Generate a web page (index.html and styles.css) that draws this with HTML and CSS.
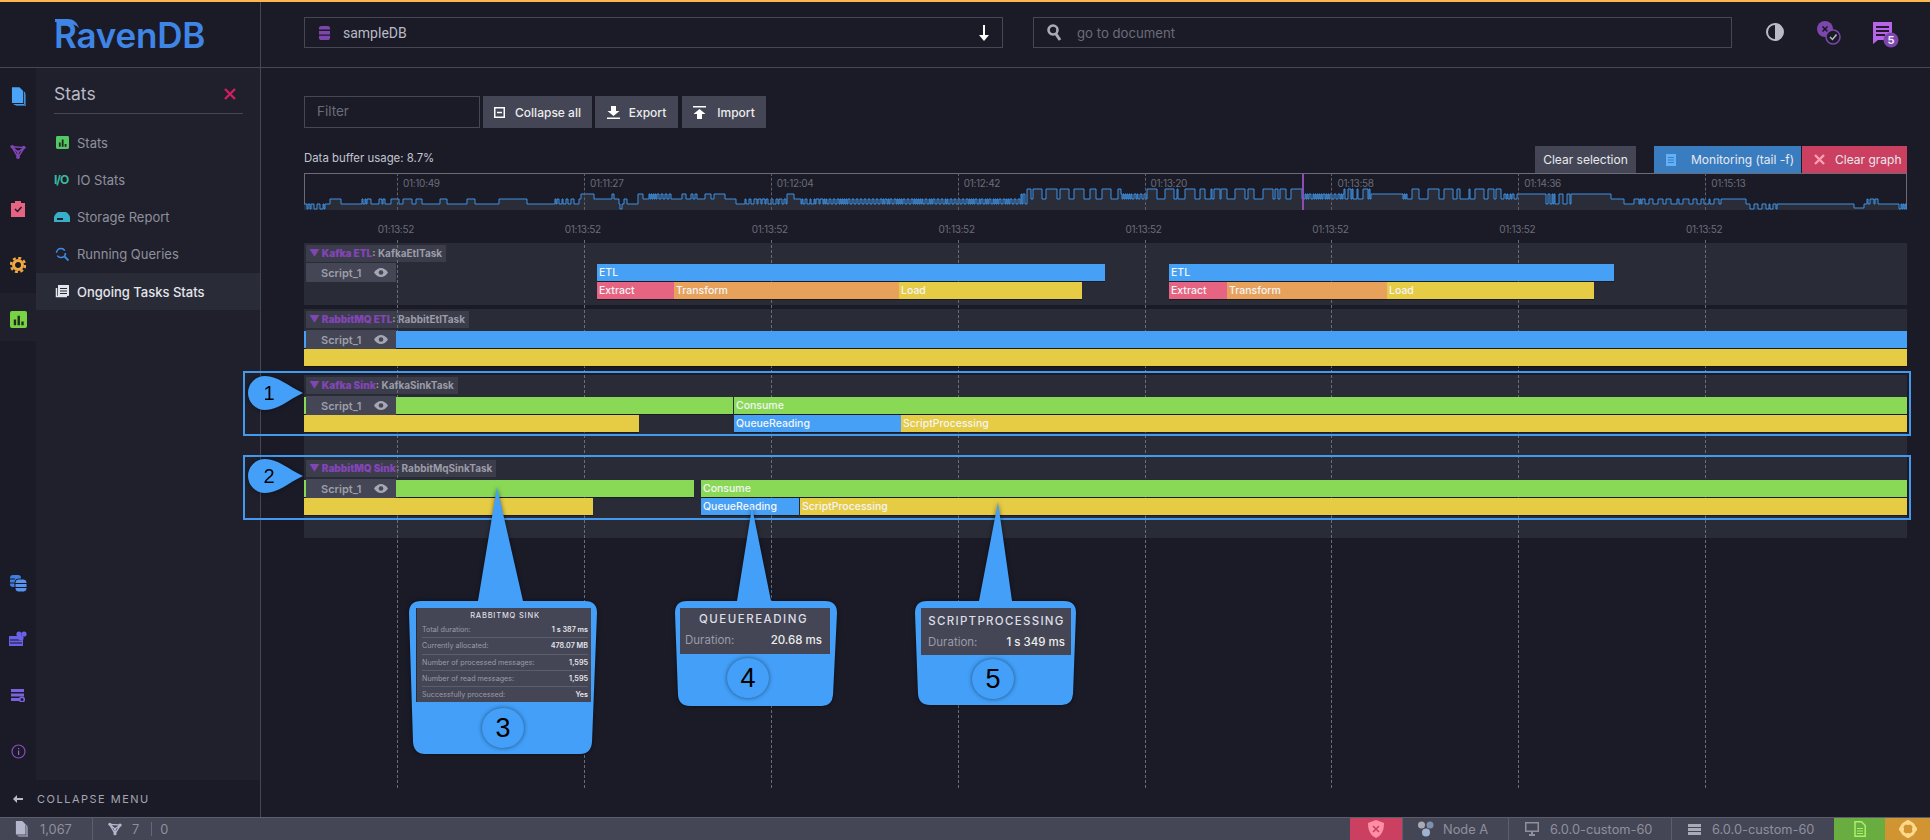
FILE: index.html
```html
<!DOCTYPE html>
<html lang="en">

<head>
  <meta charset="UTF-8" />
  <title>RavenDB - Ongoing Tasks Stats</title>
  <link rel="stylesheet" href="styles.css">
</head>

<body>
  <svg class="defs" width="0" height="0">
    <symbol id="i-doc" viewBox="0 0 16 20">
      <path d="M1 0h8l4 4v13H1z" fill="currentColor" />
      <path d="M14.5 5v13.500H3M16 7v13H5" fill="none" stroke="currentColor" stroke-width="1" />
    </symbol>
    <symbol id="i-filter" viewBox="0 0 18 18">
      <path d="M2 3l14 1-7 11zM2 3l7 6 7-5M9 9v6" fill="none" stroke="currentColor" stroke-width="1.700" />
      <circle cx="2.500" cy="3" r="2" fill="currentColor" />
      <circle cx="15.500" cy="4" r="2" fill="currentColor" />
      <circle cx="9" cy="15" r="2" fill="currentColor" />
      <circle cx="9" cy="9" r="1.600" fill="currentColor" />
    </symbol>
    <symbol id="i-chart" viewBox="0 0 18 18">
      <rect width="18" height="18" rx="2" fill="currentColor" />
      <path d="M4 9h2.500v6H4zM8 5h2.500v10H8zM12 11h2.500v4H12z" fill="#1f2a20" />
    </symbol>
  </svg>

  <header class="topbar">
    <div class="logo">
      <svg class="logo-beak" width="24" height="10" viewBox="0 0 24 10">
        <path d="M0 0h13c5 0 9 3 11 9-3-3-6-4-10-4H7L5 3H0z" fill="#3f85e6" />
      </svg>
      <span>RavenDB</span>
    </div>
    <div class="topbar-main">
      <div class="field db-select">
        <svg width="11" height="14" viewBox="0 0 12 20" preserveAspectRatio="none">
          <path d="M0 3a3 3 0 0 1 3-3h6a3 3 0 0 1 3 3v2H0zM0 7h12v5H0zM0 14h12v3a3 3 0 0 1-3 3H3a3 3 0 0 1-3-3z" fill="#7d46ad" />
        </svg>
        <span>sampleDB</span>
        <svg class="db-arrow" width="12" height="16" viewBox="0 0 12 16">
          <path d="M5 0h2v10h4l-5 6-5-6h4z" fill="#fff" />
        </svg>
      </div>
      <div class="field doc-search">
        <svg width="15" height="17" viewBox="0 0 15 17">
          <circle cx="6" cy="6" r="4.500" fill="none" stroke="#a9aab6" stroke-width="2.600" />
          <path d="M9 10l4 6" stroke="#a9aab6" stroke-width="3" />
        </svg>
        <span>go to document</span>
      </div>
      <div class="head-icons">
        <svg width="24" height="24" viewBox="0 0 24 24">
          <circle cx="12" cy="12" r="8" fill="#1a1b27" stroke="#b9bac8" stroke-width="2" />
          <path d="M12 4a8 8 0 0 1 0 16z" fill="#b9bac8" />
        </svg>
        <svg width="24" height="26" viewBox="0 0 24 26">
          <circle cx="8" cy="9" r="8" fill="#7d46ad" />
          <path d="M5.500 6.500l5 5m0-5l-5 5" stroke="#14151f" stroke-width="1.500" />
          <circle cx="16" cy="17" r="7" fill="#1a1b27" stroke="#7d46ad" stroke-width="1.500" />
          <path d="M13 17l2.500 2.500 4-5" fill="none" stroke="#b9bac8" stroke-width="1.500" />
        </svg>
        <svg width="30" height="30" viewBox="0 0 30 30">
          <path d="M2 2h19v18H7l-5 4z" fill="#b765e8" />
          <path d="M5 6h13v2H5zM5 10h13v2H5zM5 14h9v2H5z" fill="#23182f" />
          <circle cx="20" cy="20" r="7.500" fill="#7d46ad" />
          <text class="badge-num" x="20" y="24">5</text>
        </svg>
      </div>
    </div>
  </header>

  <div class="layout">
    <aside class="sidebar">
      <div class="sidebar-body">
        <nav class="rail">
          <div class="rail-top">
            <a class="rail-item"><svg class="c-blue" width="15" height="19"><use href="#i-doc" /></svg></a>
            <a class="rail-item"><svg class="c-purple" width="16" height="16"><use href="#i-filter" /></svg></a>
            <a class="rail-item">
              <svg width="14" height="16" viewBox="0 0 14 16">
                <path d="M0 2h4V0h6v2h4v14H0z" fill="#e66482" />
                <path d="M4 8l2.500 2.500 4-4.500" fill="none" stroke="#23182f" stroke-width="1.500" />
              </svg>
            </a>
            <a class="rail-item">
              <svg width="16" height="16" viewBox="0 0 16 16">
                <circle cx="8" cy="8" r="4.500" fill="none" stroke="#f0a841" stroke-width="3" />
                <circle cx="8" cy="8" r="7" fill="none" stroke="#f0a841" stroke-width="2.500" stroke-dasharray="3 2.500" />
              </svg>
            </a>
            <a class="rail-item active"><svg class="c-green" width="17" height="17"><use href="#i-chart" /></svg></a>
          </div>
          <div class="rail-bottom">
            <a class="rail-item">
              <svg width="17" height="17" viewBox="0 0 17 17">
                <rect x="0" y="0" width="11" height="12" rx="3" fill="#3f7fe0" />
                <rect x="5" y="4" width="12" height="13" rx="3.500" fill="#5a93ee" stroke="#171824" />
                <path d="M0 4h5M0 8h5M5 8.500h12M5 12.500h12" stroke="#171824" />
              </svg>
            </a>
            <a class="rail-item">
              <svg width="18" height="16" viewBox="0 0 18 16">
                <path d="M0 5h14v10H0z" fill="#6a62e6" />
                <path d="M1 9h12M1 12h12" stroke="#171824" />
                <circle cx="10" cy="3" r="2.600" fill="#6a62e6" />
                <circle cx="15" cy="3" r="2.600" fill="#6a62e6" />
                <circle cx="12" cy="7" r="2.600" fill="#6a62e6" />
              </svg>
            </a>
            <a class="rail-item">
              <svg width="14" height="13" viewBox="0 0 14 13">
                <path d="M0 0h13v3H0zM0 4.500h13v3H0zM0 9h8v3H0z" fill="#7b63e0" />
                <circle cx="11" cy="10.500" r="2.300" fill="none" stroke="#7b63e0" stroke-width="1.600" />
              </svg>
            </a>
            <a class="rail-item">
              <svg width="15" height="15" viewBox="0 0 15 15">
                <circle cx="7.500" cy="7.500" r="6.500" fill="none" stroke="#8a4bc0" stroke-width="1.200" />
                <path d="M7 6.500h1.200V11H7zM7 4h1.200v1.300H7z" fill="#9b62c9" />
              </svg>
            </a>
          </div>
        </nav>
        <div class="panel">
          <div class="panel-head">
            <h2>Stats</h2>
            <svg width="12" height="12" viewBox="0 0 12 12">
              <path d="M1 1l10 10M11 1L1 11" stroke="#cf1f5f" stroke-width="2.400" />
            </svg>
          </div>
          <ul class="menu">
            <li><svg class="c-mgreen" width="13" height="13"><use href="#i-chart" /></svg>Stats</li>
            <li><span class="io-icon">I/O</span>IO Stats</li>
            <li>
              <svg width="16" height="10" viewBox="0 0 16 10">
                <path d="M0 5c1-3 3-5 5-5h6c2 0 4 2 5 5v5H0z" fill="#39aec8" />
                <path d="M3 6h6v2H3z" fill="#1f202b" />
              </svg>Storage Report
            </li>
            <li>
              <svg width="14" height="14" viewBox="0 0 14 14">
                <circle cx="6" cy="6" r="4.500" fill="none" stroke="#3f8be6" stroke-width="1.600" stroke-dasharray="11 3" />
                <path d="M9.500 9.500l4 4" stroke="#3f8be6" stroke-width="1.800" />
              </svg>Running Queries
            </li>
            <li class="active">
              <svg width="14" height="13" viewBox="0 0 14 13">
                <path d="M3 0h11v10a1 1 0 0 1-1 1H3z" fill="#e4e5ec" />
                <path d="M5 3h7v1H5zM5 5.500h7v1H5zM5 8h7v1H5z" fill="#292b36" />
                <path d="M1.500 3v8.500H12" fill="none" stroke="#e4e5ec" stroke-width="1.500" />
              </svg>Ongoing Tasks Stats
            </li>
          </ul>
        </div>
      </div>
      <div class="collapse-menu">
        <svg width="10" height="8" viewBox="0 0 10 8">
          <path d="M4 0v3h6v2H4v3L0 4z" fill="#b9bac8" />
        </svg>
        <span>COLLAPSE MENU</span>
      </div>
    </aside>

    <main class="content">
      <div class="toolbar">
        <div class="filter">Filter</div>
        <button class="tool-btn btn-collapse">
          <svg width="11" height="11" viewBox="0 0 11 11">
            <path d="M0 0h11v11H0zM1.500 1.500v8h8v-8zM3 4.700h5v1.600H3z" fill="#fff" fill-rule="evenodd" />
          </svg>Collapse all
        </button>
        <button class="tool-btn btn-export">
          <svg width="13" height="13" viewBox="0 0 13 13">
            <path d="M4 0h5v5h3.500l-6 5-6-5H4zM0 11.500h13V13H0z" fill="#fff" />
          </svg>Export
        </button>
        <button class="tool-btn btn-import">
          <svg width="13" height="13" viewBox="0 0 13 13">
            <path d="M4 13h5V8h3.500l-6-5-6 5H4zM0 0h13v1.500H0z" fill="#fff" />
          </svg>Import
        </button>
      </div>

      <div class="buffer-row">
        <span class="buffer-text">Data buffer usage: 8.7%</span>
        <div class="graph-btns">
          <button class="graph-btn clear-sel">Clear selection</button>
          <button class="graph-btn monitoring">
            <svg width="10" height="12" viewBox="0 0 10 12">
              <path d="M0 0h10v12H0z" fill="#62b0f8" />
              <path d="M2 3h6v1H2zM2 5.500h6v1H2zM2 8h6v1H2z" fill="#3a7cc0" />
            </svg>Monitoring (tail -f)
          </button>
          <button class="graph-btn clear-graph">
            <svg width="11" height="11" viewBox="0 0 11 11">
              <path d="M1 1l9 9M10 1l-9 9" stroke="#ff9fb0" stroke-width="2.400" />
            </svg>Clear graph
          </button>
        </div>
      </div>

      <div class="overview">
        <svg id="overview-graph" class="overview-graph" width="1603" height="37" viewBox="0 0 1603 37">
          <path id="overview-area" fill="#2a2c37" />
          <path id="overview-line" fill="none" stroke="#3f92e4" stroke-width="1" />
        </svg>
        <div class="overview-ticks">
          <span>01:10:49</span><span>01:11:27</span><span>01:12:04</span><span>01:12:42</span>
          <span>01:13:20</span><span>01:13:58</span><span>01:14:36</span><span>01:15:13</span>
        </div>
        <i class="overview-cursor"></i>
      </div>

      <div class="timeline">
        <div class="axis">
          <span>01:13:52</span><span>01:13:52</span><span>01:13:52</span><span>01:13:52</span>
          <span>01:13:52</span><span>01:13:52</span><span>01:13:52</span><span>01:13:52</span>
        </div>
        <div class="grid-lines"><i></i><i></i><i></i><i></i><i></i><i></i><i></i><i></i></div>

        <section class="track track-kafka-etl">
          <div class="track-title"><b>&#9660; Kafka ETL</b>: KafkaEtlTask</div>
          <div class="track-rows">
            <div class="script-chip">Script_1<svg class="eye" width="14" height="9" viewBox="0 0 14 9"><path d="M0 4.500C2 1.500 4.500 0 7 0s5 1.500 7 4.500C12 7.500 9.500 9 7 9S2 7.500 0 4.500z" fill="#a6a7b3" /><circle cx="7" cy="4.500" r="2.300" fill="#444655" /></svg></div>
            <div class="bar-row">
              <i style="width:293px"></i><span class="bar blue" style="width:508px">ETL</span>
              <i style="width:64px"></i><span class="bar blue" style="width:445px">ETL</span>
            </div>
            <div class="bar-row">
              <i style="width:293px"></i><span class="bar pink" style="width:77px">Extract</span><span class="bar orange" style="width:225px">Transform</span><span class="bar yellow" style="width:183px">Load</span>
              <i style="width:87px"></i><span class="bar pink" style="width:58px">Extract</span><span class="bar orange" style="width:160px">Transform</span><span class="bar yellow" style="width:207px">Load</span>
            </div>
          </div>
        </section>

        <section class="track track-rabbit-etl">
          <div class="track-title"><b>&#9660; RabbitMQ ETL</b>: RabbitEtlTask</div>
          <div class="track-rows">
            <div class="script-chip">Script_1<svg class="eye" width="14" height="9" viewBox="0 0 14 9"><path d="M0 4.500C2 1.500 4.500 0 7 0s5 1.500 7 4.500C12 7.500 9.500 9 7 9S2 7.500 0 4.500z" fill="#a6a7b3" /><circle cx="7" cy="4.500" r="2.300" fill="#444655" /></svg></div>
            <div class="bar-row"><span class="bar blue grow"></span></div>
            <div class="bar-row"><span class="bar yellow grow"></span></div>
          </div>
        </section>

        <section class="track track-kafka-sink">
          <div class="track-title"><b>&#9660; Kafka Sink</b>: KafkaSinkTask</div>
          <div class="track-rows">
            <div class="script-chip">Script_1<svg class="eye" width="14" height="9" viewBox="0 0 14 9"><path d="M0 4.500C2 1.500 4.500 0 7 0s5 1.500 7 4.500C12 7.500 9.500 9 7 9S2 7.500 0 4.500z" fill="#a6a7b3" /><circle cx="7" cy="4.500" r="2.300" fill="#444655" /></svg></div>
            <div class="bar-row">
              <span class="bar green" style="width:429px"></span><i style="width:1px"></i><span class="bar green grow">Consume</span>
            </div>
            <div class="bar-row">
              <span class="bar yellow" style="width:335px"></span><i style="width:95px"></i><span class="bar blue" style="width:167px">QueueReading</span><span class="bar yellow grow">ScriptProcessing</span>
            </div>
          </div>
        </section>

        <section class="track track-rabbit-sink">
          <div class="track-title"><b>&#9660; RabbitMQ Sink</b>: RabbitMqSinkTask</div>
          <div class="track-rows">
            <div class="script-chip">Script_1<svg class="eye" width="14" height="9" viewBox="0 0 14 9"><path d="M0 4.500C2 1.500 4.500 0 7 0s5 1.500 7 4.500C12 7.500 9.500 9 7 9S2 7.500 0 4.500z" fill="#a6a7b3" /><circle cx="7" cy="4.500" r="2.300" fill="#444655" /></svg></div>
            <div class="bar-row">
              <span class="bar green" style="width:390px"></span><i style="width:7px"></i><span class="bar green grow">Consume</span>
            </div>
            <div class="bar-row">
              <span class="bar yellow" style="width:289px"></span><i style="width:108px"></i><span class="bar blue" style="width:98px">QueueReading</span><i style="width:1px"></i><span class="bar yellow grow">ScriptProcessing</span>
            </div>
          </div>
        </section>
      </div>
    </main>
  </div>

  <footer class="statusbar">
    <div class="status-cell docs"><svg class="c-status" width="13" height="16"><use href="#i-doc" /></svg>1,067</div>
    <div class="status-cell indexes">
      <svg class="c-status" width="14" height="14"><use href="#i-filter" /></svg><span>7</span><em></em><span>0</span>
    </div>
    <div class="status-right">
      <div class="status-cell license">
        <svg width="16" height="18" viewBox="0 0 16 18">
          <path d="M8 0l8 3c0 7-2 12-8 15C2 15 0 10 0 3z" fill="#ff8fa6" />
          <path d="M5 6l6 6m0-6l-6 6" stroke="#cb3f60" stroke-width="1.600" />
        </svg>
      </div>
      <div class="status-cell node">
        <svg width="16" height="16" viewBox="0 0 16 16">
          <circle cx="3.500" cy="4" r="3.500" fill="#a9aab6" />
          <circle cx="12" cy="4" r="3.500" fill="#7f90ad" />
          <circle cx="8" cy="11.500" r="4" fill="#9fb3cf" />
        </svg>Node A
      </div>
      <div class="status-cell version">
        <svg width="14" height="14" viewBox="0 0 14 14">
          <path d="M0 0h14v10H8v2h2v2H4v-2h2v-2H0zM1.500 1.500v7h11v-7z" fill="#8f909e" fill-rule="evenodd" />
        </svg>6.0.0-custom-60
      </div>
      <div class="status-cell version">
        <svg width="13" height="11" viewBox="0 0 13 11">
          <path d="M0 0h13v3H0zM0 4h13v3H0zM0 8h13v3H0z" fill="#a9aab6" />
        </svg>6.0.0-custom-60
      </div>
      <div class="status-cell green-cell">
        <svg width="12" height="16" viewBox="0 0 12 16">
          <path d="M1 .800h6.500l3.700 3.700v10.700H1z" fill="none" stroke="#a6f26a" stroke-width="1.500" />
          <path d="M3 7h6v1H3zM3 9.500h6v1H3zM3 12h6v1H3z" fill="#a6f26a" />
        </svg>
      </div>
      <div class="status-cell orange-cell">
        <svg width="18" height="18" viewBox="0 0 18 18">
          <circle cx="9" cy="9" r="6.500" fill="none" stroke="#ffd98a" stroke-width="3" />
          <circle cx="9" cy="2.500" r="2.500" fill="#ffd98a" />
          <circle cx="9" cy="15.500" r="2.500" fill="#ffd98a" />
          <circle cx="2.500" cy="9" r="2.500" fill="#ffd98a" />
          <circle cx="15.500" cy="9" r="2.500" fill="#ffd98a" />
        </svg>
      </div>
    </div>
  </footer>

  <!-- screenshot annotations, drawn over the page -->
  <div class="annotations">
    <div class="mark-box mark-1"></div>
    <div class="mark-box mark-2"></div>
    <svg class="shapes" width="1930" height="840" viewBox="0 0 1930 840">
      <path d="M303 393C288 386 278 376 265 376A17 17 0 0 0 265 410C278 410 288 400 303 393Z" />
      <path d="M303 476C288 469 278 459 265 459A17 17 0 0 0 265 493C278 493 288 483 303 476Z" />
      <path d="M497 487L523 601H585Q597 601 597 613L592 742Q591 754 580 754H425Q414 754 413 742L409 613Q409 601 421 601H478Z" />
      <path d="M752 507L771 601H825Q837 601 837 613L833 695Q832 706 822 706H690Q679 706 678 695L675 613Q675 601 687 601H737Z" />
      <path d="M998 502L1012 601H1064Q1076 601 1076 613L1073 694Q1072 705 1062 705H930Q919 705 918 694L915 613Q915 601 927 601H979Z" />
      <text x="269" y="400">1</text>
      <text x="269" y="483">2</text>
    </svg>

    <div class="tip tip-sink">
      <h4>RABBITMQ SINK</h4>
      <dl>
        <div><dt>Total duration:</dt><dd>1 s 387 ms</dd></div>
        <div><dt>Currently allocated:</dt><dd>478.07 MB</dd></div>
        <div><dt>Number of processed messages:</dt><dd>1,595</dd></div>
        <div><dt>Number of read messages:</dt><dd>1,595</dd></div>
        <div><dt>Successfully processed:</dt><dd>Yes</dd></div>
      </dl>
    </div>
    <div class="tip tip-big tip-queue">
      <h4>QUEUEREADING</h4>
      <div class="tip-row"><span>Duration:</span><b>20.68 ms</b></div>
    </div>
    <div class="tip tip-big tip-script">
      <h4>SCRIPTPROCESSING</h4>
      <div class="tip-row"><span>Duration:</span><b>1 s 349 ms</b></div>
    </div>

    <div class="num num-3">3</div>
    <div class="num num-4">4</div>
    <div class="num num-5">5</div>
  </div>

  <script>
    // levels of the overview line, y inside the 37px high graph
    const Z = 36, A = 31, B = 26, C = 21, D = 16;

    // [from, to, level, other level, longest run]
    const regions = [
      [0, 21, A, Z, 3], [21, 26, A], [26, 37, B], [37, 57, A], [57, 63, A, B, 2], [63, 125, B, A, 9],
      [125, 136, A], [136, 143, B], [143, 163, A], [163, 171, B], [171, 195, A], [195, 223, B],
      [223, 250, A], [250, 270, A, B, 3], [270, 275, A], [275, 277, B], [277, 290, C], [290, 308, B],
      [308, 310, C], [310, 315, B], [315, 320, A, Z, 2], [320, 323, B], [323, 334, A], [334, 339, C],
      [339, 345, B], [345, 368, C, B, 2], [368, 378, B], [378, 412, C, B, 9], [412, 421, C], [421, 432, B],
      [432, 438, A], [438, 483, A, B, 3], [483, 490, C], [490, 497, B], [497, 520, A, B, 3],
      [520, 717, B, A, 2], [717, 723, C, A, 2], [723, 817, D, B, 11], [817, 843, C, B, 2], [843, 1000, D, B, 11],
      [1000, 1040, B, C, 2], [1040, 1067, D, B, 5], [1067, 1098, C], [1098, 1103, C, B, 2], [1103, 1108, B],
      [1108, 1200, D, B, 11], [1200, 1213, C, B, 3], [1213, 1240, C], [1240, 1267, C, A, 4], [1267, 1307, C],
      [1307, 1320, B], [1320, 1330, A], [1330, 1417, B, A, 6], [1417, 1442, B], [1442, 1473, A, Z, 4],
      [1473, 1550, A], [1550, 1560, 35], [1560, 1575, A, B, 6], [1575, 1595, A], [1595, 1603, Z, A, 3]
    ];

    let seed = 7;
    function next(max) {
      seed = (seed * 1103515245 + 12345) & 0x7fffffff;
      return 1 + (seed >> 8) % max;
    }

    let line = 'M0 ' + regions[0][2];
    regions.forEach(([from, to, a, b, run]) => {
      if (!b) {
        line += `V${a}H${to}`;
        return;
      }
      let x = from, level = a;
      while (x < to) {
        x = Math.min(to, x + next(run));
        line += `V${level}H${x}`;
        level = level === a ? b : a;
      }
    });

    document.getElementById('overview-line').setAttribute('d', line);
    document.getElementById('overview-area').setAttribute('d', line + 'V37H0Z');
  </script>
</body>

</html>
```
FILE: styles.css
```css
* {
  box-sizing: border-box;
  margin: 0;
  padding: 0;
}

html,
body {
  height: 100%;
  overflow: hidden;
}

body {
  position: relative;
  display: flex;
  flex-direction: column;
  font-family: Inter, "Liberation Sans", sans-serif;
  color: #a5a6b2;
  background: #1a1b27;
}

ul {
  list-style: none;
}

button {
  font-family: inherit;
  border: none;
}

.defs {
  position: absolute;
}

.c-blue { color: #4aa3f7; }
.c-purple { color: #8245b5; }
.c-green { color: #78d244; }
.c-mgreen { color: #55c765; }
.c-status { color: #b4b6cc; }

/* top bar */
.topbar {
  display: flex;
  height: 68px;
  flex: none;
  border-top: 2px solid #ffb64d;
  border-bottom: 1px solid #464753;
}

.logo {
  position: relative;
  width: 261px;
  flex: none;
  padding: 11px 0 0 54px;
  border-right: 1px solid #464753;
  font-size: 35px;
  font-weight: 600;
  line-height: 44px;
  letter-spacing: -0.2px;
  color: #3f85e6;
}

.logo-beak {
  position: absolute;
  left: 55px;
  top: 17px;
}

.topbar-main {
  display: flex;
  flex: 1;
  padding: 15px 0 0 43px;
}

.field {
  display: flex;
  align-items: center;
  width: 699px;
  height: 31px;
  border: 1px solid #464753;
}

.db-select {
  padding: 0 12px 0 14px;
  gap: 13px;
  font-family: Roboto, sans-serif;
  font-size: 14px;
  color: #b9bac8;
}

.db-arrow {
  margin-left: auto;
}

.doc-search {
  margin-left: 30px;
  padding: 0 13px;
  gap: 15px;
  font-size: 13.200px;
  color: #6b6c78;
}

.head-icons {
  display: flex;
  align-items: flex-start;
  gap: 30px;
  margin-left: 31px;
  padding-top: 3px;
}

/* sidebar */
.layout {
  display: flex;
  flex: 1;
  min-height: 0;
}

.sidebar {
  display: flex;
  flex-direction: column;
  width: 261px;
  flex: none;
  border-right: 1px solid #464753;
}

.sidebar-body {
  display: flex;
  flex: 1;
}

.rail {
  display: flex;
  flex-direction: column;
  justify-content: space-between;
  width: 36px;
  flex: none;
}

.rail-item {
  display: flex;
  align-items: center;
  justify-content: center;
  height: 56.250px;
}

.rail-item.active {
  height: 48px;
  padding-top: 5px;
  background: #1f202b;
}

.panel {
  flex: 1;
  background: #1f202b;
}

.panel-head {
  display: flex;
  align-items: center;
  justify-content: space-between;
  height: 46px;
  margin: 0 17px 0 18px;
  padding: 6px 7px 0 0;
  border-bottom: 1px solid #464753;
}

.panel-head h2 {
  font-size: 17.500px;
  font-weight: 400;
  color: #b9bac8;
}

.menu {
  margin-top: 10px;
}

.menu li {
  display: grid;
  grid-template-columns: 16px 1fr;
  align-items: center;
  column-gap: 7px;
  height: 37.250px;
  padding-left: 18px;
  font-size: 13px;
  color: #8f909e;
}

.menu li svg {
  justify-self: center;
}

.menu li.active {
  font-weight: 500;
  color: #e4e5ec;
  background: #292b36;
}

.io-icon {
  font-size: 12px;
  font-weight: 700;
  letter-spacing: -1px;
  color: #3bb89f;
}

.collapse-menu {
  display: flex;
  align-items: center;
  gap: 14px;
  height: 37px;
  flex: none;
  padding-left: 13px;
  font-size: 11px;
  letter-spacing: 1.500px;
  color: #a5a6b2;
}

/* main area */
.content {
  flex: 1;
  min-width: 0;
  padding: 28px 23px 0 43px;
}

.toolbar {
  display: flex;
  gap: 3px;
}

.filter {
  width: 176px;
  height: 32px;
  padding-left: 12px;
  border: 1px solid #464753;
  font-size: 13.500px;
  line-height: 29px;
  color: #6b6c78;
}

.tool-btn {
  display: flex;
  align-items: center;
  justify-content: center;
  height: 32px;
  font-size: 12px;
  font-weight: 500;
  color: #eceded;
  background: #444655;
}

.btn-collapse {
  width: 109px;
  gap: 10px;
}

.btn-export {
  width: 83px;
  gap: 9px;
}

.btn-import {
  width: 84px;
  margin-left: 1px;
  gap: 11px;
}

.buffer-row {
  display: flex;
  align-items: flex-end;
  justify-content: space-between;
  height: 27px;
  margin-top: 18px;
}

.buffer-text {
  padding-bottom: 8px;
  font-size: 11.400px;
  color: #c4c5cf;
}

.graph-btns {
  display: flex;
}

.graph-btn {
  display: flex;
  align-items: center;
  height: 27px;
  font-size: 12px;
  color: #e8e9ee;
}

.clear-sel {
  width: 101px;
  justify-content: center;
  margin-right: 18px;
  background: #444655;
}

.monitoring {
  width: 147px;
  gap: 15px;
  padding-left: 12px;
  background: #3a7cc0;
}

.clear-graph {
  width: 105px;
  gap: 10px;
  margin-left: 1px;
  padding-left: 12px;
  background: #cb3f60;
}

.overview {
  position: relative;
  height: 37px;
  border: 1px solid #6b6c78;
  border-bottom: none;
}

.overview-graph {
  position: absolute;
  left: -1px;
  top: -1px;
}

.overview-ticks {
  position: absolute;
  left: 92px;
  top: -1px;
  display: flex;
  height: 37px;
}

.overview-ticks span {
  width: 186.900px;
  padding: 4px 0 0 5px;
  border-left: 1px dashed #5f606c;
  font-size: 10px;
  letter-spacing: -0.300px;
  color: #6b6c78;
}

.overview-cursor {
  position: absolute;
  left: 997px;
  top: -1px;
  width: 2px;
  height: 37px;
  background: #8c4bb5;
}

/* tracks */
.timeline {
  position: relative;
}

.axis {
  display: flex;
  height: 33px;
  margin-left: -1.500px;
  padding-top: 13px;
}

.axis span {
  width: 186.900px;
  text-align: center;
  font-size: 10px;
  letter-spacing: -0.300px;
  color: #6b6c78;
}

.grid-lines {
  position: absolute;
  left: 93px;
  top: 30px;
  display: flex;
  height: 548px;
}

.grid-lines i {
  width: 186.900px;
  border-left: 1px dashed #6b6c78;
}

.track {
  padding: 2px 0 0;
  background: #292b36;
}

.track-title {
  width: max-content;
  height: 17px;
  margin-left: 2px;
  padding: 0 4px 0 3px;
  font-size: 10px;
  font-weight: 700;
  line-height: 17px;
  color: #9b9ca8;
  background: #3b3d4b;
}

.track-title b {
  color: #8245b5;
}

.track-rows {
  position: relative;
  margin-top: 3px;
}

.script-chip {
  position: absolute;
  z-index: 3;
  left: 2px;
  top: -1px;
  display: flex;
  align-items: center;
  justify-content: space-between;
  width: 90px;
  height: 19px;
  padding: 0 8px 0 15px;
  font-size: 11px;
  font-weight: 600;
  color: #9d9ea9;
  background: #444655;
}

.bar-row {
  position: relative;
  z-index: 2;
  display: flex;
  height: 17px;
  margin-bottom: 1px;
}

.bar-row i {
  flex: none;
}

.bar {
  flex: none;
  height: 17px;
  padding-left: 2px;
  overflow: hidden;
  font-size: 10.500px;
  font-weight: 500;
  line-height: 17px;
  white-space: nowrap;
  color: #f4f5f8;
  box-shadow: 0 1px 0 rgba(0, 0, 0, 0.35);
}

.bar.grow {
  flex: 1;
}

.blue { background: #46a0f6; }
.green { background: #89d956; }
.yellow { background: #e6cb45; }
.pink { background: #e66482; }
.orange { background: #e7a15b; }

.track-kafka-etl {
  height: 62px;
}

.track-kafka-etl .track-rows {
  margin-top: 2px;
}

.track-rabbit-etl {
  height: 57px;
  margin-top: 4px;
}

.track-kafka-sink {
  height: 83px;
  margin-top: 9px;
}

.track-rabbit-sink {
  height: 80px;
}

/* status bar */
.statusbar {
  display: flex;
  height: 23px;
  flex: none;
  border-top: 1px solid #5c5e6c;
  font-size: 12.800px;
  color: #8f909e;
  background: #444655;
}

.status-cell {
  display: flex;
  align-items: center;
  height: 100%;
}

.docs {
  width: 93px;
  gap: 12px;
  padding-left: 15px;
  border-right: 1px solid #5c5e6c;
}

.indexes {
  padding-left: 15px;
}

.indexes span:first-of-type {
  margin-left: 10px;
}

.indexes em {
  width: 1px;
  height: 14px;
  margin: 0 8px 0 12px;
  background: #5e6a85;
}

.status-right {
  display: flex;
  margin-left: auto;
}

.license {
  justify-content: center;
  width: 52px;
  background: #cb3f60;
}

.node {
  width: 106px;
  gap: 9px;
  padding-left: 15px;
  border-left: 1px solid #5c5e6c;
}

.version {
  width: 163px;
  gap: 11px;
  padding-left: 16px;
  border-left: 1px solid #5c5e6c;
}

.green-cell {
  justify-content: center;
  width: 51px;
  background: #69ad40;
}

.orange-cell {
  justify-content: center;
  width: 45px;
  background: #d09433;
}

/* annotations */
.annotations {
  position: absolute;
  z-index: 5;
  left: 0;
  top: 0;
  width: 1930px;
  height: 840px;
  pointer-events: none;
}

.mark-box {
  position: absolute;
  left: 243px;
  width: 1668px;
  border: 2px solid #4299ee;
}

.mark-1 {
  top: 371px;
  height: 65px;
}

.mark-2 {
  top: 455px;
  height: 65px;
}

.shapes {
  position: absolute;
  left: 0;
  top: 0;
  fill: #439ff8;
  filter: drop-shadow(0 0 2px rgba(0, 0, 0, 0.5));
}

.shapes text {
  font-family: "Liberation Sans", sans-serif;
  font-size: 20px;
  text-anchor: middle;
  fill: #000;
}

.badge-num {
  font-family: Inter, sans-serif;
  font-size: 11px;
  font-weight: 700;
  text-anchor: middle;
  fill: #f0e6f8;
}

.tip {
  position: absolute;
  top: 608px;
  background: #444655;
}

.tip h4 {
  font-weight: 500;
  text-align: center;
  color: #dddee6;
}

.tip-sink {
  left: 416px;
  width: 175px;
  height: 94px;
  padding: 3px 3px 0 5px;
  border-left: 1px solid #2a2c37;
}

.tip-sink h4 {
  font-size: 7.500px;
  letter-spacing: 0.800px;
  line-height: 10px;
}

.tip-sink dl {
  margin-top: 1px;
}

.tip-sink dl div {
  display: flex;
  justify-content: space-between;
  height: 16.300px;
  border-bottom: 1px solid #5c5e6c;
  font-size: 7.200px;
  line-height: 15px;
}

.tip-sink dl div:last-child {
  border-bottom: none;
}

.tip-sink dt {
  color: #9a9ba7;
}

.tip-sink dd {
  font-weight: 600;
  color: #e4e5ec;
}

.tip-big {
  width: 150px;
  font-size: 11.500px;
}

.tip-big h4 {
  font-size: 11.500px;
  line-height: 16px;
}

.tip-queue {
  left: 680px;
  height: 46px;
  padding: 3px 8px 0 5px;
}

.tip-queue h4 {
  letter-spacing: 1.500px;
}

.tip-script {
  left: 921px;
  height: 47px;
  padding: 5px 6px 0 7px;
}

.tip-script h4 {
  letter-spacing: 1.300px;
}

.tip-row {
  display: flex;
  justify-content: space-between;
  margin-top: 6px;
  color: #9a9ba7;
}

.tip-row b {
  font-weight: 500;
  color: #eceded;
}

.num {
  position: absolute;
  width: 42px;
  height: 40px;
  border-radius: 50%;
  font-family: "Liberation Sans", sans-serif;
  font-size: 27px;
  line-height: 40px;
  text-align: center;
  color: #000;
  background: #439ff8;
  box-shadow: 0 0 4px rgba(0, 0, 0, 0.5);
}

.num-3 {
  left: 482px;
  top: 708px;
}

.num-4 {
  left: 727px;
  top: 658px;
}

.num-5 {
  left: 972px;
  top: 659px;
}
```
